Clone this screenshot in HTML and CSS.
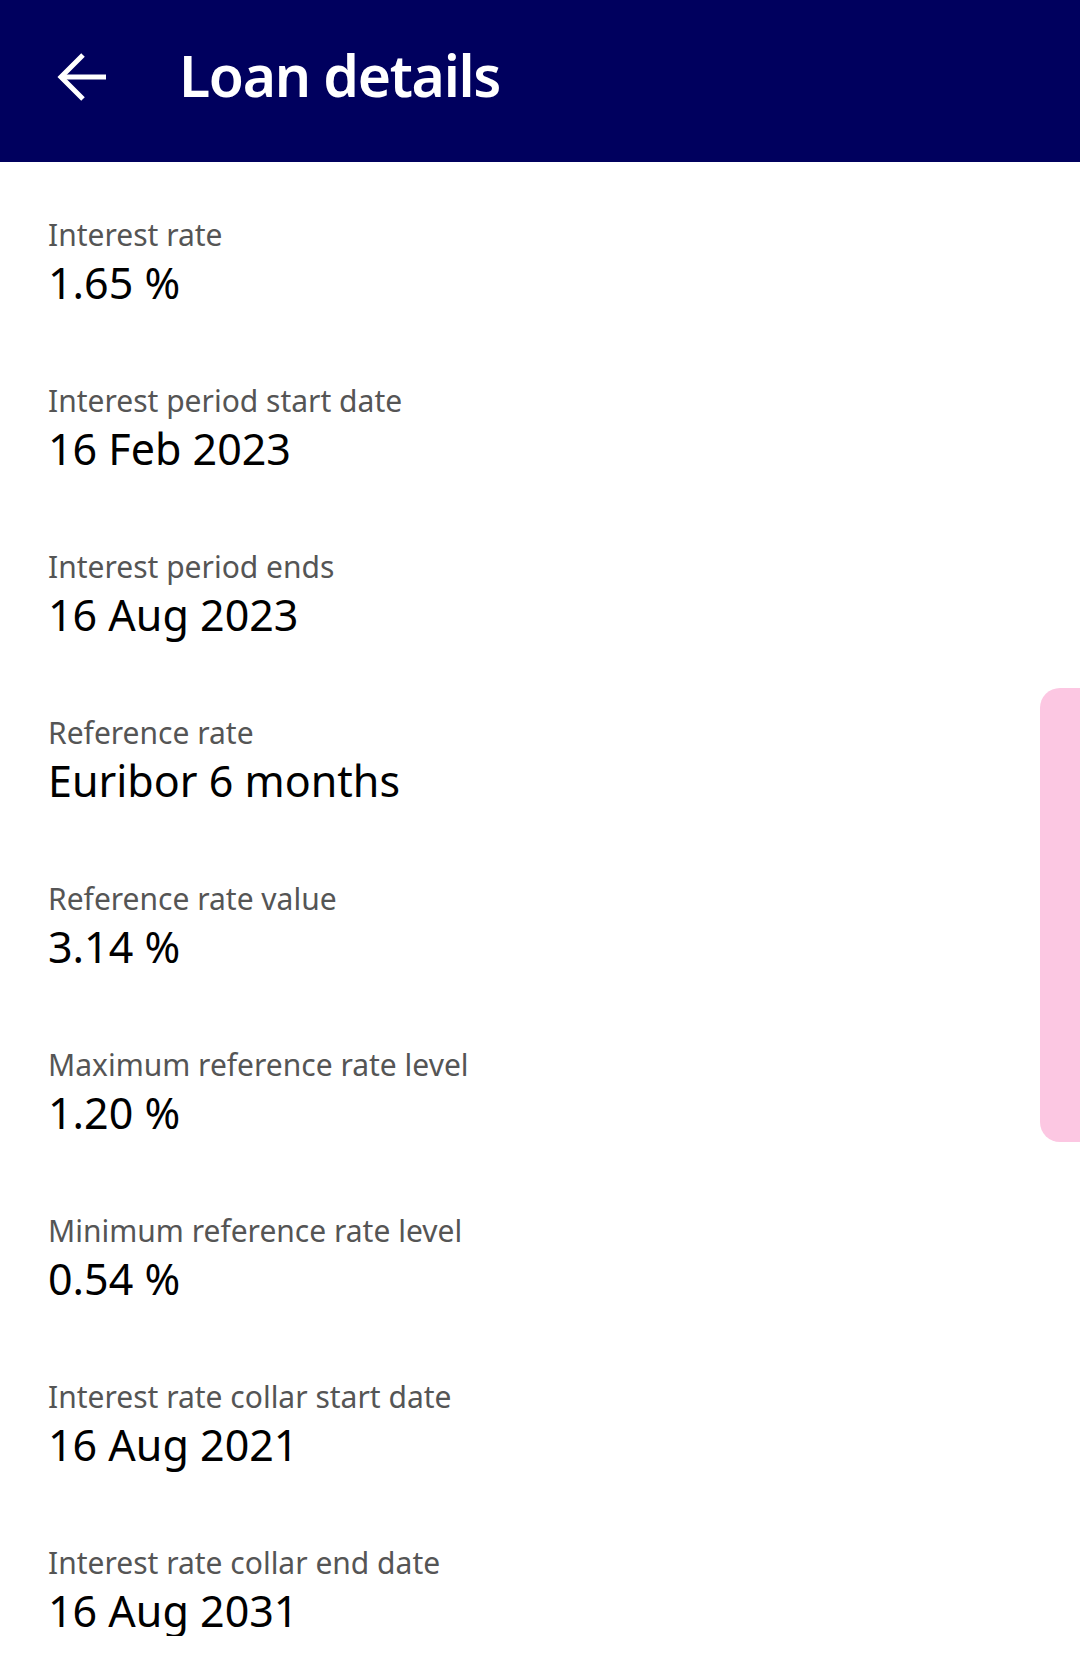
FILE: index.html
```html
<!DOCTYPE html>
<html lang="en">
<head>
<meta charset="utf-8">
<title>Loan details</title>
<link rel="stylesheet" href="styles.css">
</head>
<body>
<header class="topbar">
  <button class="back" aria-label="Back">
    <svg width="52" height="52" viewBox="0 0 52 52" fill="none" stroke="#fff" stroke-width="5" stroke-linecap="butt" stroke-linejoin="miter">
      <path d="M50 26H5"/>
      <path d="M27 4L5 26l22 22"/>
    </svg>
  </button>
  <h1 class="title">Loan details</h1>
</header>
<main class="details">
  <div class="item"><div class="label">Interest rate</div><div class="value">1.65 %</div></div>
  <div class="item"><div class="label">Interest period start date</div><div class="value">16 Feb 2023</div></div>
  <div class="item"><div class="label">Interest period ends</div><div class="value">16 Aug 2023</div></div>
  <div class="item"><div class="label">Reference rate</div><div class="value">Euribor 6 months</div></div>
  <div class="item"><div class="label">Reference rate value</div><div class="value">3.14 %</div></div>
  <div class="item"><div class="label">Maximum reference rate level</div><div class="value">1.20 %</div></div>
  <div class="item"><div class="label">Minimum reference rate level</div><div class="value">0.54 %</div></div>
  <div class="item"><div class="label">Interest rate collar start date</div><div class="value">16 Aug 2021</div></div>
  <div class="item"><div class="label">Interest rate collar end date</div><div class="value">16 Aug 2031</div></div>
</main>
<div class="side-tab"></div>
</body>
</html>
```
FILE: styles.css
```css
html, body {
  margin: 0;
  padding: 0;
  background: #ffffff;
  font-family: "Noto Sans", "Open Sans", sans-serif;
  overflow: hidden;
}

.topbar {
  height: 162px;
  background: #00005e;
  display: flex;
  align-items: center;
  box-sizing: border-box;
  padding-left: 56px;
}

.back {
  background: none;
  border: 0;
  padding: 0;
  width: 52px;
  height: 52px;
  display: flex;
  align-items: center;
  justify-content: center;
  margin-bottom: 8px;
}

.title {
  margin: 0 0 12px 71px;
  color: #ffffff;
  font-size: 57px;
  font-weight: 600;
  letter-spacing: -1.3px;
  line-height: 1;
}

.details {
  display: flex;
  flex-direction: column;
  gap: 75px;
  padding: 55px 48px 0 48px;
}

.item {
  display: flex;
  flex-direction: column;
  gap: 5px;
}

.label {
  font-size: 30px;
  line-height: 36px;
  color: #555555;
}

.value {
  font-size: 43px;
  line-height: 50px;
  color: #000000;
}

.side-tab {
  position: absolute;
  top: 688px;
  right: 0;
  width: 40px;
  height: 454px;
  background: #fcc7e2;
  border-radius: 20px 0 0 20px;
}
```
